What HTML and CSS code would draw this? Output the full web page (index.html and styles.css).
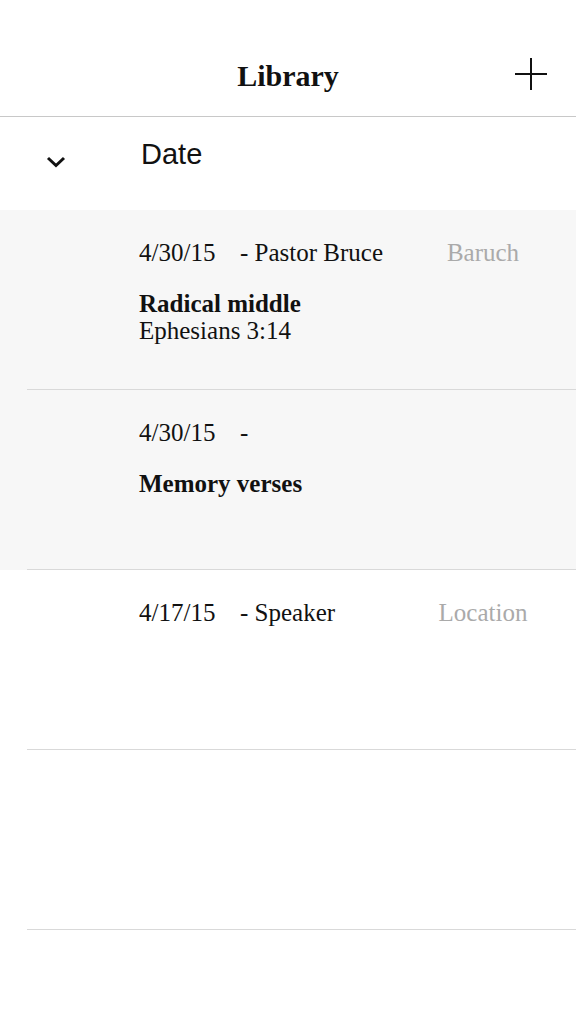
FILE: index.html
```html
<!DOCTYPE html>
<html lang="en">
<head>
    <meta charset="UTF-8">
    <meta name="viewport" content="width=device-width, initial-scale=1.0">
    <title>Library</title>
    <link rel="stylesheet" href="styles.css">
</head>
<body>
    <header class="navbar">
        <h1 class="nav-title">Library</h1>
        <button class="add-button" aria-label="Add">
            <svg width="32" height="32" viewBox="0 0 32 32">
                <path d="M16 0 V32 M0 16 H32" stroke="#111" stroke-width="2" fill="none"/>
            </svg>
        </button>
    </header>

    <div class="sort-row">
        <span class="sort-toggle">
            <svg width="20" height="12" viewBox="0 0 20 12">
                <path d="M2 2 L10 9.5 L18 2" stroke="#111" stroke-width="3" fill="none"/>
            </svg>
        </span>
        <span class="sort-label">Date</span>
    </div>

    <div class="entries">
        <div class="entry shaded">
            <div class="entry-inner">
                <div class="entry-meta">
                    <span class="entry-date">4/30/15</span>
                    <span class="entry-speaker">- Pastor Bruce</span>
                    <span class="entry-location">Baruch</span>
                </div>
                <div class="entry-body">
                    <div class="entry-title">Radical middle</div>
                    <div class="entry-passage">Ephesians 3:14</div>
                </div>
            </div>
        </div>
        <div class="entry shaded">
            <div class="entry-inner">
                <div class="entry-meta">
                    <span class="entry-date">4/30/15</span>
                    <span class="entry-speaker">-</span>
                    <span class="entry-location"></span>
                </div>
                <div class="entry-body">
                    <div class="entry-title">Memory verses</div>
                </div>
            </div>
        </div>
        <div class="entry">
            <div class="entry-inner">
                <div class="entry-meta">
                    <span class="entry-date">4/17/15</span>
                    <span class="entry-speaker">- Speaker</span>
                    <span class="entry-location">Location</span>
                </div>
            </div>
        </div>
        <div class="entry">
            <div class="entry-inner"></div>
        </div>
    </div>
</body>
</html>
```

FILE: styles.css
```css
body {
    margin: 0;
    background-color: #fff;
    color: #111;
    font-family: 'Liberation Serif', 'Times New Roman', serif;
}
.navbar {
    display: flex;
    align-items: center;
    justify-content: center;
    position: relative;
    height: 80px;
    padding-top: 36px;
    border-bottom: 1px solid #c8c8c8;
}
.nav-title {
    margin: 0;
    font-size: 30px;
    font-weight: bold;
    line-height: 36px;
}
.add-button {
    position: absolute;
    right: 29px;
    top: 58px;
    width: 32px;
    height: 32px;
    padding: 0;
    border: none;
    background: none;
}
.add-button svg {
    display: block;
}
.sort-row {
    display: flex;
    align-items: flex-start;
    height: 93px;
    background-color: #fff;
}
.sort-toggle {
    width: 20px;
    margin-left: 46px;
    margin-right: 75px;
    margin-top: 39px;
}
.sort-toggle svg {
    display: block;
}
.sort-label {
    margin-top: 20px;
    font-family: 'Liberation Sans', Arial, sans-serif;
    font-size: 29px;
    line-height: 34px;
    color: #111;
}
.entry {
    background-color: #fff;
}
.entry.shaded {
    background-color: #f7f7f7;
}
.entry-inner {
    margin-left: 27px;
    height: 179px;
    border-bottom: 1px solid #d9d9d9;
    padding-left: 112px;
}
.entry-meta {
    display: flex;
    padding-top: 29px;
    font-size: 25px;
    line-height: 28px;
}
.entry-date {
    width: 101px;
}
.entry-speaker {
    flex: 1;
}
.entry-location {
    width: 120px;
    margin-right: 33px;
    text-align: center;
    color: #aaa;
}
.entry-body {
    margin-top: 23px;
    font-size: 25px;
    line-height: 27px;
}
.entry-title {
    font-weight: bold;
}
```
